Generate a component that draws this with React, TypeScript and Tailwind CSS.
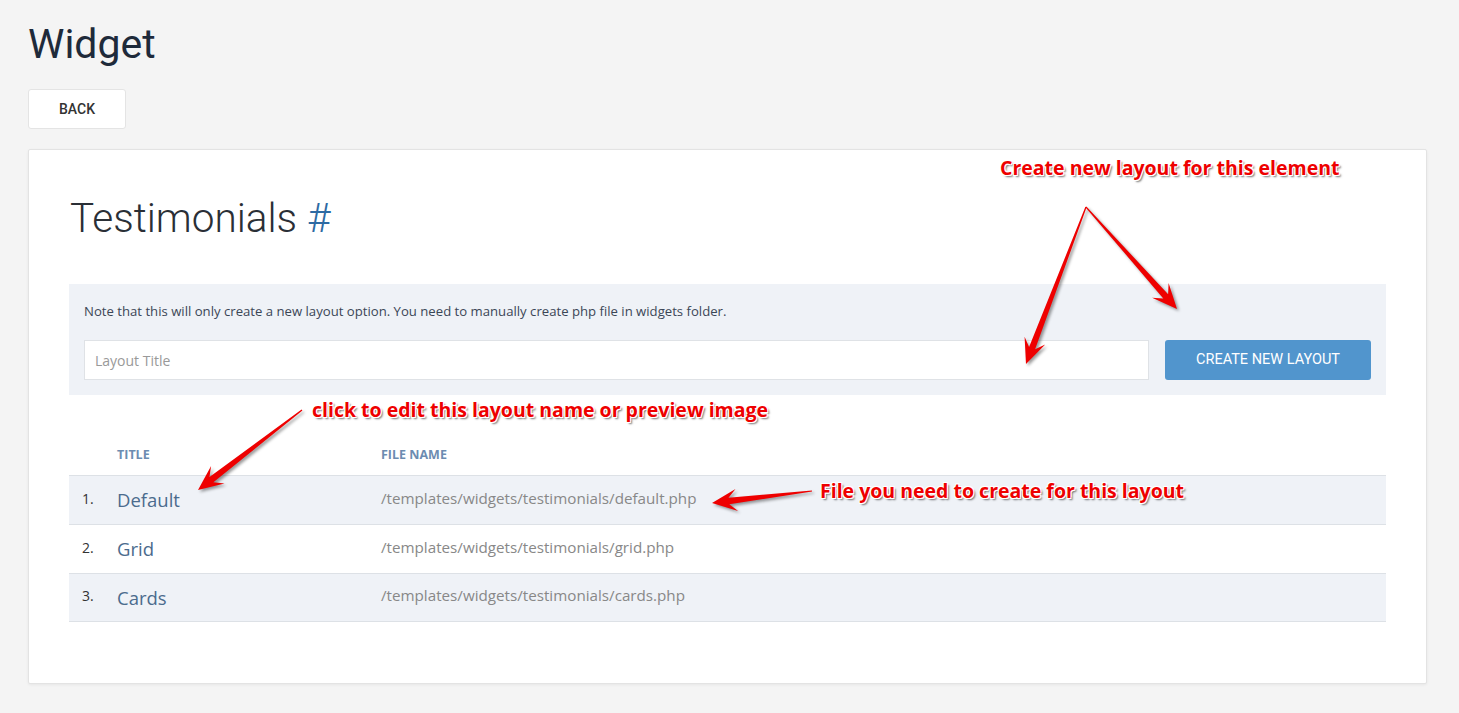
import React from 'react'

const Layouts = [
  { title: 'Default', file: '/templates/widgets/testimonials/default.php' },
  { title: 'Grid', file: '/templates/widgets/testimonials/grid.php' },
  { title: 'Cards', file: '/templates/widgets/testimonials/cards.php' },
]

// tapered "snagit" style arrow, thin at the start, barbed head at the end
const arrowPoints = (x1: number, y1: number, x2: number, y2: number) => {
  const dx = x2 - x1
  const dy = y2 - y1
  const L = Math.hypot(dx, dy)
  const ux = dx / L
  const uy = dy / L
  const px = -uy
  const py = ux
  const hl = 22
  const pt = (a: number, b: number) =>
    `${(x1 + ux * a + px * b).toFixed(1)},${(y1 + uy * a + py * b).toFixed(1)}`
  return [
    pt(0, -0.6),
    pt(L - hl + 5, -3.2),
    pt(L - hl - 3, -11),
    pt(L, 0),
    pt(L - hl - 3, 11),
    pt(L - hl + 5, 3.2),
    pt(0, 0.6),
  ].join(' ')
}

const Arrows = [
  [1086, 207, 1026, 364],
  [1086, 207, 1177, 309],
  [302, 410, 198, 490],
  [812, 491, 712, 503],
]

const noteClass =
  "absolute whitespace-nowrap font-['Open_Sans',sans-serif] text-[19.5px] font-bold leading-none text-[#ee0000] [text-shadow:-1px_-1px_0_#fff,1px_-1px_0_#fff,-1px_1px_0_#fff,1px_1px_0_#fff,0_-1px_0_#fff,0_1px_0_#fff,2px_2px_2px_rgba(0,0,0,0.55)]"

const App = () => {
  return (
    <div className="relative min-h-screen w-full bg-[#f4f4f4] pb-[28px] pl-[28px] pr-[32px] pt-[18px] font-['Open_Sans',sans-serif]">
      <h1 className="font-['Roboto',sans-serif] text-[41px] font-normal leading-[52px] text-[#1e2a3a]">
        Widget
      </h1>
      <button className="mt-[19px] h-[40px] w-[98px] rounded-[3px] border border-[#e4e4e4] bg-white font-['Roboto',sans-serif] text-[14px] font-medium text-[#333]">
        BACK
      </button>
      <div className="mt-[20px] rounded-[2px] border border-[#e3e3e3] bg-white px-[40px] pb-[61px] pt-[38px] shadow-[0_1px_3px_rgba(0,0,0,0.06)]">
        <h2 className="pl-[1px] font-['Roboto',sans-serif] text-[40.5px] font-light leading-[60px] text-[#2a2f36]">
          Testimonials <span className="text-[#2d6aa3]">#</span>
        </h2>
        <div className="mt-[36px] bg-[#eff2f7] px-[15px] pb-[15px] pt-[18px]">
          <p className="text-[13.15px] leading-[18px] text-[#3b4656]">
            Note that this will only create a new layout option. You need to
            manually create php file in widgets folder.
          </p>
          <div className="mt-[20px] flex gap-[16px]">
            <input
              placeholder="Layout Title"
              className="h-[40px] flex-1 border border-[#dfe2e6] bg-white px-[10px] text-[14px] text-[#333] outline-none placeholder:text-[#999]"
            />
            <button className="h-[40px] w-[206px] rounded-[3px] bg-[#5195cd] font-['Roboto',sans-serif] text-[14.5px] font-normal text-white">
              CREATE NEW LAYOUT
            </button>
          </div>
        </div>
        <div className="mt-[48px]">
          <div className="flex h-[32px] items-center pb-[7px] text-[12.5px] font-bold uppercase text-[#6c8cb1]">
            <div className="w-[48px]" />
            <div className="w-[264px]">Title</div>
            <div>File name</div>
          </div>
          {Layouts.map((l, i) => {
            return (
              <div
                key={i}
                className={`flex h-[49px] items-center border-t border-[#dde1e6] ${
                  i % 2 == 0 ? 'bg-[#eff2f7]' : 'bg-white'
                } ${i == Layouts.length - 1 ? 'border-b' : ''}`}
              >
                <div className="w-[48px] pb-[4px] pl-[13px] text-[14px] text-[#333]">
                  {i + 1}.
                </div>
                <div className="w-[264px] text-[18.5px] text-[#4b6b8d]">
                  {l.title}
                </div>
                <div className="pb-[4px] text-[15.2px] text-[#888]">{l.file}</div>
              </div>
            )
          })}
        </div>
      </div>

      <svg
        className="pointer-events-none absolute left-0 top-0 [filter:drop-shadow(2px_2px_1.5px_rgba(0,0,0,0.4))]"
        width={1459}
        height={713}
      >
        {Arrows.map((a, i) => (
          <polygon key={i} points={arrowPoints(a[0], a[1], a[2], a[3])} fill="#ee0000" />
        ))}
      </svg>
      <div className={noteClass + ' left-[1000px] top-[158px]'}>
        Create new layout for this element
      </div>
      <div className={noteClass + ' left-[312px] top-[400px]'}>
        click to edit this layout name or preview image
      </div>
      <div className={noteClass + ' left-[820px] top-[481px]'}>
        File you need to create for this layout
      </div>
    </div>
  )
}

export default App
